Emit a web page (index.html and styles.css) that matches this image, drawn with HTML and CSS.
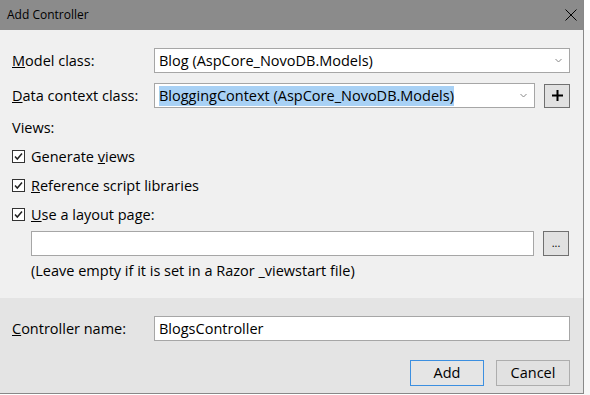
FILE: index.html
```html
<!DOCTYPE html>
<html lang="en">
<head>
    <meta charset="UTF-8">
    <title>Add Controller</title>

    <link rel="stylesheet" href="styles.css">
</head>
<body>
    <div class="dialog">
        <div class="title-bar">
            <span class="title-text">Add Controller</span>
            <svg class="close-icon" width="12" height="12" viewBox="0 0 12 12">
                <path d="M0.5 0.5 L11.5 11.5 M11.5 0.5 L0.5 11.5" stroke="#000" stroke-width="1" fill="none"/>
            </svg>
        </div>

        <div class="main-area">
            <div class="form-row">
                <label class="row-label"><u>M</u>odel class:</label>
                <div class="select-box wide">
                    <span>Blog (AspCore_NovoDB.Models)</span>
                    <svg class="chevron" width="7" height="5" viewBox="0 0 7 5">
                        <path d="M0.5 1 L3.5 4 L6.5 1" stroke="#888" stroke-width="1" fill="none"/>
                    </svg>
                </div>
            </div>

            <div class="form-row">
                <label class="row-label"><u>D</u>ata context class:</label>
                <div class="select-box">
                    <span class="selected">BloggingContext (AspCore_NovoDB.Models)</span>
                    <svg class="chevron" width="7" height="5" viewBox="0 0 7 5">
                        <path d="M0.5 1 L3.5 4 L6.5 1" stroke="#888" stroke-width="1" fill="none"/>
                    </svg>
                </div>
                <div class="small-btn plus-btn">
                    <svg width="11" height="11" viewBox="0 0 11 11">
                        <path d="M5.5 0 V11 M0 5.5 H11" stroke="#000" stroke-width="2" fill="none"/>
                    </svg>
                </div>
            </div>

            <div class="views-label">Views:</div>

            <div class="check-row">
                <span class="check-box">
                    <svg width="13" height="13" viewBox="0 0 13 13">
                        <rect x="0.5" y="0.5" width="12" height="12" fill="#fff" stroke="#333"/>
                        <path d="M3 6.5 L5.3 9 L10 3.5" stroke="#222" stroke-width="1.5" fill="none"/>
                    </svg>
                </span>
                <span>Generate <u>v</u>iews</span>
            </div>
            <div class="check-row">
                <span class="check-box">
                    <svg width="13" height="13" viewBox="0 0 13 13">
                        <rect x="0.5" y="0.5" width="12" height="12" fill="#fff" stroke="#333"/>
                        <path d="M3 6.5 L5.3 9 L10 3.5" stroke="#222" stroke-width="1.5" fill="none"/>
                    </svg>
                </span>
                <span><u>R</u>eference script libraries</span>
            </div>
            <div class="check-row">
                <span class="check-box">
                    <svg width="13" height="13" viewBox="0 0 13 13">
                        <rect x="0.5" y="0.5" width="12" height="12" fill="#fff" stroke="#333"/>
                        <path d="M3 6.5 L5.3 9 L10 3.5" stroke="#222" stroke-width="1.5" fill="none"/>
                    </svg>
                </span>
                <span><u>U</u>se a layout page:</span>
            </div>

            <div class="layout-row">
                <div class="text-box layout-input"></div>
                <div class="small-btn dots-btn">...</div>
            </div>
            <div class="hint-text">(Leave empty if it is set in a Razor _viewstart file)</div>
        </div>

        <div class="bottom-area">
            <div class="form-row">
                <label class="row-label"><u>C</u>ontroller name:</label>
                <div class="text-box wide">BlogsController</div>
            </div>
            <div class="button-row">
                <div class="dlg-btn default-btn">Add</div>
                <div class="dlg-btn">Cancel</div>
            </div>
        </div>
    </div>
    <div class="behind-strip"></div>
</body>
</html>
```

FILE: styles.css
```css
* {
    margin: 0;
    padding: 0;
    box-sizing: border-box;
}

body {
    display: flex;
    width: 590px;
    height: 395px;
    overflow: hidden;
    background-color: #ffffff;
    font-family: "Open Sans", "Noto Sans", sans-serif;
    font-size: 14.5px;
    line-height: 20px;
    color: #000000;
}

.dialog {
    display: flex;
    flex-direction: column;
    width: 584px;
    height: 394px;
    border-right: 1px solid #888888;
    border-bottom: 1px solid #888888;
    background-color: #f0f0f0;
}

.behind-strip {
    flex: 1;
    border-top: 30px solid #ffffff;
    background-color: #f7f7f7;
}

.title-bar {
    display: flex;
    align-items: center;
    justify-content: space-between;
    height: 30px;
    padding: 0 5px 0 7px;
    background-color: #8b8b8b;
    font-size: 12px;
}

.close-icon {
    margin-right: 1px;
}

.main-area {
    display: flex;
    flex-direction: column;
    padding: 18px 13px 0 12px;
    height: 268px;
}

.form-row {
    display: flex;
    align-items: center;
    height: 25px;
    margin-bottom: 10px;
}

.row-label {
    width: 142px;
    flex-shrink: 0;
}

.select-box, .text-box {
    display: flex;
    align-items: center;
    justify-content: space-between;
    height: 25px;
    padding: 0 7px 0 4px;
    background-color: #ffffff;
    border: 1px solid #a6a6a6;
    white-space: nowrap;
}

.select-box {
    width: 382px;
}

.select-box.wide, .text-box.wide {
    width: 416px;
}

.selected {
    background-color: #a8d1f5;
    line-height: 20px;
}

.chevron {
    margin-bottom: 1px;
}

.small-btn {
    display: flex;
    align-items: center;
    justify-content: center;
    width: 26px;
    height: 25px;
    margin-left: 9px;
    background-color: #e1e1e1;
    border: 1px solid #707070;
}

.plus-btn {
    height: 24px;
}

.dots-btn {
    font-size: 11px;
    line-height: 1;
    padding-bottom: 2px;
}

.views-label {
    height: 20px;
    margin-bottom: 4px;
}

.check-row {
    display: flex;
    align-items: center;
    height: 29px;
}

.check-box {
    display: flex;
    width: 19px;
}

.layout-row {
    display: flex;
    margin-left: 19px;
    margin-top: 2px;
}

.layout-input {
    width: 503px;
}

.hint-text {
    margin-left: 19px;
    margin-top: 5px;
}

.bottom-area {
    flex: 1;
    display: flex;
    flex-direction: column;
    padding: 18px 13px 0 12px;
    background-color: #e4e4e4;
}

.button-row {
    display: flex;
    justify-content: flex-end;
    gap: 12px;
    margin-top: 9px;
}

.dlg-btn {
    display: flex;
    align-items: center;
    justify-content: center;
    width: 74px;
    height: 26px;
    background-color: #e1e1e1;
    border: 1px solid #adadad;
}

.default-btn {
    border-color: #3c8fe0;
    background-color: #e5e5e5;
}
```
